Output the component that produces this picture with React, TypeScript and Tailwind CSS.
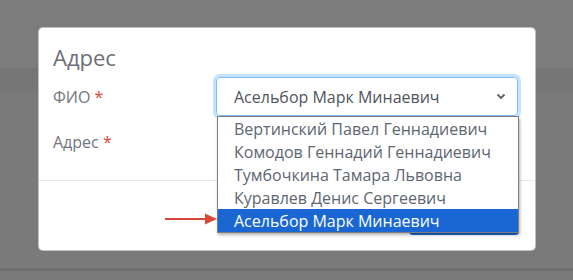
import React from "react";

const items = [
  "Вертинский Павел Геннадиевич",
  "Комодов Геннадий Геннадиевич",
  "Тумбочкина Тамара Львовна",
  "Куравлев Денис Сергеевич",
  "Асельбор Марк Минаевич",
];

export default function App() {
  return (
    <div
      className="relative w-[573px] h-[280px] overflow-hidden bg-[#7b7b7b] flex flex-col"
      style={{ fontFamily: '"Open Sans", "Noto Sans", sans-serif' }}
    >
      <div className="h-[68px] bg-[#7c7c7c]" />
      <div className="h-[24px] bg-[#767676]" />
      <div className="h-[176px] bg-[#7a7a7a]" />
      <div className="h-[3px] bg-[#6e6e6e]" />
      <div className="flex-1 bg-[#7a7a7a]" />

      {/* modal */}
      <div className="absolute left-[38px] top-[27px] w-[498px] h-[224px] bg-white rounded-[5px] border border-[rgba(0,0,0,0.25)] flex flex-col">
        <div className="px-[14px] pt-[13px] h-[49px]">
          <h2 className="text-[22px] leading-[33px] text-[#6c6f78] font-normal">Адрес</h2>
        </div>
        <div className="px-[14px] flex flex-col gap-[6px] h-[103px]">
          <div className="flex items-center h-[39px]">
            <div className="w-[163px] text-[16px] text-[#73767d]">
              ФИО <span className="text-[#e8443a]">*</span>
            </div>
            <div className="relative w-[302px]">
              <div className="h-[39px] rounded-[4px] border border-[#80bdff] shadow-[0_0_0_3px_rgba(0,123,255,0.22)] flex items-center pl-[17px] pr-[10px] text-[16px] text-[#4f555c]">
                <span className="flex-1">Асельбор Марк Минаевич</span>
                <svg width="10" height="7" viewBox="0 0 10 7" className="mr-[1px]">
                  <path d="M1.5 1.5 L5 5 L8.5 1.5" fill="none" stroke="#5a5f66" strokeWidth="1.8" />
                </svg>
              </div>
              <div className="absolute left-[1px] top-[39px] w-[302px] z-10 bg-white border border-[#7d7d7d] shadow-[1px_2px_3px_rgba(0,0,0,0.3)] flex flex-col">
                {items.map((t, i) => (
                  <div
                    key={t}
                    className={
                      i === items.length - 1
                        ? "h-[23px] flex items-center pl-[16px] text-[16px] bg-[#1a67d4] text-white"
                        : "h-[23px] flex items-center pl-[16px] text-[16px] text-[#5e6672]"
                    }
                  >
                    {t}
                  </div>
                ))}
              </div>
            </div>
          </div>
          <div className="flex items-center h-[39px]">
            <div className="w-[163px] text-[16px] text-[#73767d]">
              Адрес <span className="text-[#e8443a]">*</span>
            </div>
          </div>
        </div>
        <div className="flex-1 border-t border-[#e6e8ec] flex justify-end items-start pt-[19px] pr-[16px]">
          <div className="w-[110px] h-[35px] rounded-[4px] bg-[#1a67d4]" />
        </div>
      </div>

      {/* arrow */}
      <svg className="absolute left-[164px] top-[212px]" width="54" height="14" viewBox="0 0 54 14">
        <line x1="1" y1="7" x2="44" y2="7" stroke="#d9463a" strokeWidth="2" />
        <polygon points="41,1.5 53,7 41,12.5" fill="#d9463a" />
      </svg>
    </div>
  );
}
